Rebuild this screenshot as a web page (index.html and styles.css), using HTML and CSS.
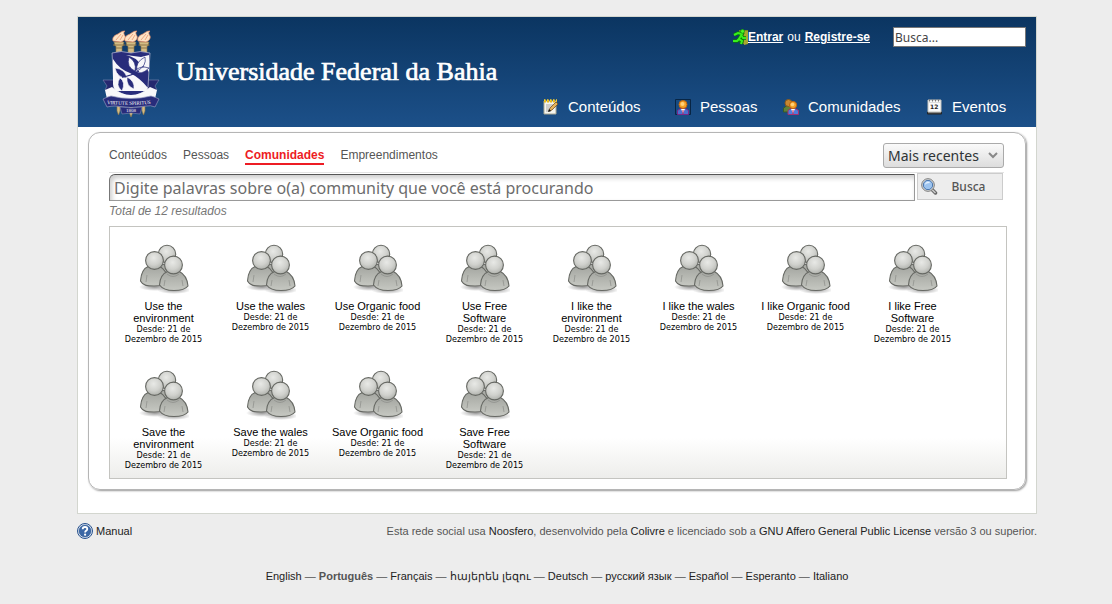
FILE: index.html
```html
<!DOCTYPE html>
<html lang="pt">
<head>
<meta charset="utf-8">
<title>Comunidades - Universidade Federal da Bahia</title>
<link rel="stylesheet" href="styles.css">
</head>
<body>
<svg class="defs" width="0" height="0" aria-hidden="true">
  <defs>
    <radialGradient id="head" cx=".45" cy=".35" r=".65"><stop offset="0" stop-color="#e8e9e6"/><stop offset=".6" stop-color="#d0d1cd"/><stop offset="1" stop-color="#b0b2ad"/></radialGradient>
    <linearGradient id="torso" x1="0" y1="0" x2="0" y2="1"><stop offset="0" stop-color="#a3a5a0"/><stop offset=".5" stop-color="#b5b7b1"/><stop offset="1" stop-color="#c6c8c2"/></linearGradient>
    <radialGradient id="shade"><stop offset="0" stop-color="#000" stop-opacity=".4"/><stop offset="1" stop-color="#000" stop-opacity="0"/></radialGradient>
    <symbol id="group" viewBox="0 0 50 50">
      <ellipse cx="16" cy="43" rx="16" ry="4" fill="url(#shade)"/><ellipse cx="35" cy="46" rx="17" ry="4" fill="url(#shade)"/>
      <g stroke="#666863" stroke-width="1.1">
        <path d="M14 32C16 23 22 20 27 20s12 4 14 13z" fill="url(#torso)"/>
        <circle cx="28" cy="10" r="8.7" fill="url(#head)"/>
        <path d="M1.500 37C2 28 5 24 10 22h10c6 3 9 8 9 16-3 4-9 4-14 4C9 42 4 42 1.500 37z" fill="url(#torso)"/>
        <circle cx="15.500" cy="16.500" r="8.900" fill="url(#head)"/>
        <path d="M20.500 41c.3-8 4-12 9-14h10c6 3 9 8 9.500 15-3 4-9 4.500-14 4.500s-11-.5-14.500-5.500z" fill="url(#torso)"/>
        <circle cx="34.500" cy="21" r="8.900" fill="url(#head)"/>
      </g>
      <path d="M7 38l1-7M25 42l1-6M44 42l-1-6M28 30q6 5 12 0" stroke="#8b8d88" fill="none" stroke-width=".7"/>
    </symbol>
  </defs>
</svg>

<div class="page">
  <div class="sheet">
    <header class="header">
      <a class="brand" href="#">
        <svg class="crest" width="58" height="88" viewBox="0 0 58 88" aria-hidden="true">
          <g fill="#d3bc85" stroke="#8d7547" stroke-width=".6">
            <path d="M12 12h10l-1 4h-1v8h-6v-8h-1zM24 12h10l-1 4h-1v8h-6v-8h-1zM37 12h10l-1 4h-1v8h-6v-8h-1z"/>
            <path d="M15 72h3v9l-1.500 4-1.500-4zM27 74h4v8l-2 5-2-5zM40 72h3v9l-1.500 4-1.500-4z"/>
          </g>
          <path d="M11 15h12M23.500 15h11M36.500 15h11M14 18h6M26 18h6M39 18h6" stroke="#8d7547"/>
          <g fill="#fde3c5" stroke="#e78961" stroke-width=".7">
            <path d="M11 11c-1-4 2-6 5-7 2-1 3-3 7-3-2 2-1 3 0 5s-1 5-4 6z"/>
            <path d="M23 11c-1-4 2-6 5-7 2-1 3-3 7-3-2 2-1 3 0 5s-1 5-4 6z"/>
            <path d="M36 11c-1-4 2-6 5-7 2-1 3-3 7-3-2 2-1 3 0 5s-1 5-4 6z"/>
            <path d="M14 10l5-6M18 10l3-5M26 10l5-6M30 10l3-5M39 10l5-6M43 10l3-5" fill="none"/>
          </g>
          <path d="M1 50h14v12H7l-4-2 2-4zM57 50H43v12h8l4-2-2-4z" fill="#25286f" stroke="#9296bd" stroke-width=".5"/>
          <path d="M10 23q9-3 19 0 10-3 19 0l-2 34q-3 6-17 10Q15 63 12 57z" fill="#282c7b" stroke="#aaaecb" stroke-width=".8"/>
          <path d="M11 29q6 10 17 14 10 5 18 15l-2 3H14q-3-3-3-7z" fill="#f7f7fa"/>
          <path d="M24 25q10 2 15 10 5 2 8 7V25l-8 2z" fill="#f7f7fa"/>
          <g fill="#f7f7fa" stroke="#282c7b" stroke-width=".7">
            <path d="M27 27q8 5 6 14-9-4-6-14zM43 27q2 9-8 14-2-9 8-14zM47 38q-8 8-14 3 5-6 14-3z"/>
          </g>
          <g fill="#282c7b" stroke="#f7f7fa" stroke-width=".6">
            <path d="M13 38q10 1 12 10-10 0-12-10zM18 48q6 4 2 13-7-6-2-13zM25 47q8 4 7 12-8-3-7-12z"/>
          </g>
          <path d="M20 47q9-1 17-6" stroke="#282c7b" fill="none" stroke-width="1.300"/>
          <path d="M3 60l7-3q9 8 19 8t19-8l7 3-2 9H5z" fill="#f7f7fa"/>
          <path d="M1 69q4-2 8-3 20 5 40 0 4 1 8 3l-4 8q-5-2-8-1-16 3-32 0-4 0-8 1z" fill="#282c7b" stroke="#9296bd" stroke-width=".7"/>
          <path id="ribbon" d="M5 74q24 2 52-1" fill="none"/>
          <text class="motto"><textPath href="#ribbon">VIRTUTE SPIRITUS</textPath></text>
          <path d="M18 77q11 2 22 0l-2 7q-9-2-18 0z" fill="#282c7b" stroke="#9296bd" stroke-width=".5"/>
          <text class="year" x="24" y="82">1808</text>
        </svg>
        <span class="brand-name">Universidade Federal da Bahia</span>
      </a>
      <div class="header-side">
        <div class="account">
          <p class="login">
            <svg width="16" height="16" viewBox="0 0 16 16" aria-hidden="true"><path d="M7 1h9v14H8z" fill="#7a8b22"/><path d="M12 2h4v13l-4 1z" fill="#a9a72f"/><path d="M2 6l4-2 4 1-3 5 3 2-1 3M7 10l-2 2H1M9 6l2 3h3" stroke="#087a09" stroke-width="3.500" fill="none"/><path d="M2 6l4-2 4 1-3 5 3 2-1 3M7 10l-2 2H1M9 6l2 3h3" stroke="#38ef1c" stroke-width="2" fill="none"/><circle cx="10.500" cy="2.300" r="2" fill="#49f725" stroke="#087a09" stroke-width=".6"/></svg><a href="#">Entrar</a> ou <a href="#">Registre-se</a>
          </p>
          <input class="site-search" type="text" placeholder="Busca..." aria-label="Busca no site">
        </div>
        <nav class="menu">
          <a href="#"><svg width="16" height="16" viewBox="0 0 16 16"><path d="M1 2h12v13H1z" fill="#f4f4ef" stroke="#aaa893"/><path d="M3 6h7M3 8h7M3 10h5M3 12h5" stroke="#a6a6a6"/><path d="M1 2h13" stroke="#e6b91a" stroke-width="3" stroke-dasharray="2 1"/><path d="M1 1h13" stroke="#ffe14a" stroke-dasharray="1 2"/><path d="M6 12l1-3 6-6 2 2-6 6z" fill="#e5b35b" stroke="#79501e" stroke-width=".8"/><path d="M5 13l1-3 2 2z" fill="#111"/></svg>Conteúdos</a>
          <a href="#"><svg width="16" height="16" viewBox="0 0 16 16"><path d="M.5.500h15v15H.5z" fill="#174b82" stroke="#082544"/><path d="M2.500 15.500v-4l3-2h5l3 2v4z" fill="#4b70ce" stroke="#7b2788"/><path d="M6 10l2 4 2-4z" fill="#fff"/><path d="M8 11v4" stroke="#c22858"/><circle cx="8" cy="5.500" r="4" fill="#f4a22a" stroke="#bd6510"/><circle cx="7.500" cy="5" r="2" fill="#ffd179"/></svg>Pessoas</a>
          <a href="#"><svg width="16" height="16" viewBox="0 0 16 16"><path d="M.5 13V9l3-2h4v6z" fill="#61803b" stroke="#385c25"/><circle cx="5.500" cy="4" r="3.500" fill="#c78732" stroke="#8b591a"/><path d="M5 15.500v-4l3-2h4l3.500 2v4z" fill="#4e7ddd" stroke="#a42f72"/><path d="M8 10l2 4 2-4z" fill="#fff"/><path d="M10 11v4" stroke="#d32b54"/><circle cx="10" cy="6" r="3.600" fill="#f4a22a" stroke="#bd6510"/><circle cx="9.500" cy="5.500" r="1.800" fill="#ffd179"/></svg>Comunidades</a>
          <a href="#"><svg width="16" height="16" viewBox="0 0 16 16"><path d="M1 12l-.5 3h14l-.5-3z" fill="#555" stroke="#222"/><path d="M1 1h13v12H1z" fill="#fafafa" stroke="#c2c2bd"/><path d="M2 1.500h12" stroke="#777" stroke-width="2" stroke-dasharray="1 2"/><path d="M1 3.500h13" stroke="#ddd"/><text class="day" x="3" y="10">12</text></svg>Eventos</a>
        </nav>
      </div>
    </header>

    <main class="panel">
      <div class="toolbar">
        <nav class="tabs">
          <a href="#">Conteúdos</a>
          <a href="#">Pessoas</a>
          <a class="active" href="#" aria-current="page">Comunidades</a>
          <a href="#">Empreendimentos</a>
        </nav>
        <select class="order" aria-label="Ordenar por">
          <option>Mais recentes</option>
        </select>
      </div>
      <form class="search">
        <input class="query" type="text" placeholder="Digite palavras sobre o(a) community que você está procurando" aria-label="Pesquisar comunidades">
        <button class="submit" type="button"><svg width="17" height="17" viewBox="0 0 17 17" aria-hidden="true"><path d="M11 11.500l3.500 3.500" stroke="#666" stroke-width="3.500" stroke-linecap="round"/><path d="M11 11.500l3.500 3.500" stroke="#ccc" stroke-width="1.500"/><circle cx="7" cy="7" r="6.300" fill="#e6e6e2" stroke="#777"/><circle cx="7" cy="7" r="4.700" fill="#9dc4ef" stroke="#426fa9"/><path d="M4 7q0-3 3-3.500 2 .5 2 1.500-4 0-5 2z" fill="#e5f2ff"/></svg><span>Busca</span></button>
      </form>
      <p class="total">Total de 12 resultados</p>
      <ul class="results">
        <li><a href="#"><svg><use href="#group"/></svg><strong>Use the<br>environment</strong><small>Desde: 21 de<br>Dezembro de 2015</small></a></li>
        <li><a href="#"><svg><use href="#group"/></svg><strong>Use the wales</strong><small>Desde: 21 de<br>Dezembro de 2015</small></a></li>
        <li><a href="#"><svg><use href="#group"/></svg><strong>Use Organic food</strong><small>Desde: 21 de<br>Dezembro de 2015</small></a></li>
        <li><a href="#"><svg><use href="#group"/></svg><strong>Use Free<br>Software</strong><small>Desde: 21 de<br>Dezembro de 2015</small></a></li>
        <li><a href="#"><svg><use href="#group"/></svg><strong>I like the<br>environment</strong><small>Desde: 21 de<br>Dezembro de 2015</small></a></li>
        <li><a href="#"><svg><use href="#group"/></svg><strong>I like the wales</strong><small>Desde: 21 de<br>Dezembro de 2015</small></a></li>
        <li><a href="#"><svg><use href="#group"/></svg><strong>I like Organic food</strong><small>Desde: 21 de<br>Dezembro de 2015</small></a></li>
        <li><a href="#"><svg><use href="#group"/></svg><strong>I like Free<br>Software</strong><small>Desde: 21 de<br>Dezembro de 2015</small></a></li>
        <li><a href="#"><svg><use href="#group"/></svg><strong>Save the<br>environment</strong><small>Desde: 21 de<br>Dezembro de 2015</small></a></li>
        <li><a href="#"><svg><use href="#group"/></svg><strong>Save the wales</strong><small>Desde: 21 de<br>Dezembro de 2015</small></a></li>
        <li><a href="#"><svg><use href="#group"/></svg><strong>Save Organic food</strong><small>Desde: 21 de<br>Dezembro de 2015</small></a></li>
        <li><a href="#"><svg><use href="#group"/></svg><strong>Save Free<br>Software</strong><small>Desde: 21 de<br>Dezembro de 2015</small></a></li>
      </ul>
    </main>
  </div>

  <footer class="footer">
    <div class="credits">
      <a class="manual" href="#"><svg width="16" height="16" viewBox="0 0 16 16" aria-hidden="true"><circle cx="8" cy="8" r="7.500" fill="#e8eef6" stroke="#27518d"/><circle cx="8" cy="8" r="6" fill="#3b67a5" stroke="#27518d" stroke-width=".5"/><path d="M5.700 6.200q0-2.200 2.300-2.200t2.300 2q0 1.200-1.300 1.900-.9.500-.9 1.600" fill="none" stroke="#fff" stroke-width="1.800"/><circle cx="8.100" cy="11.700" r="1.100" fill="#fff"/></svg>Manual</a>
      <p>Esta rede social usa <a href="#">Noosfero</a>, desenvolvido pela <a href="#">Colivre</a> e licenciado sob a <a href="#">GNU Affero General Public License</a> versão 3 ou superior.</p>
    </div>
    <p class="languages"><a href="#">English</a> — <strong>Português</strong> — <a href="#">Français</a> — <a href="#">հայերեն լեզու</a> — <a href="#">Deutsch</a> — <a href="#">русский язык</a> — <a href="#">Español</a> — <a href="#">Esperanto</a> — <a href="#">Italiano</a></p>
  </footer>
</div>
</body>
</html>
```
FILE: styles.css
```css
* { box-sizing: border-box; }
body {
  margin: 0;
  padding: 16px 0 0 2px;
  background: #ededed;
  color: #555;
  font: 11px/16px "Liberation Sans", Arial, sans-serif;
}
p, ul { margin: 0; padding: 0; }
a { color: inherit; text-decoration: none; }
.defs { display: block; }
.page { max-width: 960px; margin: 0 auto; }
.sheet {
  padding-bottom: 23px;
  background: #fff;
  border: 1px solid #d3d6cf;
}

.header {
  display: flex;
  justify-content: space-between;
  min-height: 110px;
  background: linear-gradient(#0b3561, #1c5089);
  color: #fff;
}
.brand { display: flex; align-items: center; gap: 16px; padding-left: 24px; }
.crest { margin-top: 4px; }
.motto { fill: #fff; font: 5px "Liberation Serif", serif; }
.year { fill: #fff; font: 5px "Liberation Serif", serif; }
.brand-name { font: 26px/32px "Liberation Serif", "Times New Roman", serif; -webkit-text-stroke: 0.7px #fff; }
.header-side {
  display: flex;
  flex-direction: column;
  justify-content: space-between;
  align-items: flex-end;
  padding: 10px 10px 10px 0;
}
.account { display: flex; align-items: center; gap: 23px; }
.login { display: flex; align-items: center; gap: 4px; font-size: 12px; }
.login svg { margin-right: -4px; }
.login a { font-weight: bold; text-decoration: underline; }
.site-search {
  width: 133px;
  height: 20px;
  padding: 0 1px;
  border: 1px solid #777;
  font: 12px "Noto Sans", sans-serif;
}
.site-search::placeholder { color: #444; opacity: 1; }
.menu {
  display: grid;
  grid-template-columns: 132px 108px 144px 99px;
  font-size: 15px;
  line-height: 20px;
}
.menu a { display: flex; align-items: center; gap: 9px; }
.day { font: bold 6px "DejaVu Sans", sans-serif; fill: #222; }

.panel {
  margin: 5px 10px 0;
  padding: 10px 18px 10px 20px;
  border: 1px solid #b5b5b5;
  border-radius: 12px;
  box-shadow: 1px 1px 2px #999;
}
.toolbar {
  display: flex;
  justify-content: space-between;
  align-items: center;
  margin-right: 3px;
  padding-bottom: 4px;
  border-bottom: 1px solid #e3e3e3;
}
.tabs { display: flex; gap: 16px; font-size: 12px; line-height: 16px; }
.tabs .active { color: #ed1c24; font-weight: bold; border-bottom: 2px solid #ed1c24; }
.order {
  appearance: none;
  width: 121px;
  height: 25px;
  padding: 0 4px;
  border: 1px solid #aaa;
  border-radius: 3px;
  background:
    url("data:image/svg+xml,%3Csvg xmlns='http://www.w3.org/2000/svg' width='10' height='7'%3E%3Cpath d='M1 1l4 4 4-4' fill='none' stroke='%23888' stroke-width='2'/%3E%3C/svg%3E") no-repeat right 5px center,
    linear-gradient(#fafafa, #ddd);
  color: #2e3436;
  font: 14px "Noto Sans", sans-serif;
}
.search { display: flex; gap: 2px; margin-right: 4px; }
.query {
  flex: 1;
  min-width: 0;
  height: 27px;
  margin-top: 1px;
  padding: 0 4px;
  border: 1px solid #999;
  border-top-color: #555;
  border-left-color: #777;
  border-radius: 6px 0 0 0;
  box-shadow: inset 2px 3px 5px #ccc;
  font: 16px "Noto Sans", sans-serif;
}
.query::placeholder { color: #6c6c6c; opacity: 1; }
.submit {
  display: flex;
  align-items: center;
  width: 86px;
  height: 27px;
  padding: 0 3px;
  border: 1px solid #ccc;
  background: #ededed;
  color: #555;
  font: 500 12px "Noto Sans", sans-serif;
}
.submit span { flex: 1; }
.total { margin-top: 2px; color: #777; font-size: 12px; font-style: italic; }
.results {
  display: flex;
  flex-wrap: wrap;
  row-gap: 26px;
  margin-top: 7px;
  padding: 17px 0 8px;
  border: 1px solid #c4c4c0;
  background: linear-gradient(#fff calc(100% - 40px), #ededeb);
  list-style: none;
}
.results li { width: 107px; color: #000; text-align: center; }
.results svg { display: block; width: 50px; height: 50px; margin: 0 auto 6px; }
.results a { display: block; }
.results strong { display: block; font-weight: normal; line-height: 12px; white-space: nowrap; }
.results small { display: block; font: 9px/10px "DejaVu Sans Condensed", "DejaVu Sans", sans-serif; }

.footer a { color: #222; }
.credits { display: flex; justify-content: space-between; align-items: center; margin-top: 9px; }
.manual { display: flex; align-items: center; gap: 3px; }
.languages { margin-top: 29px; text-align: center; }
```
